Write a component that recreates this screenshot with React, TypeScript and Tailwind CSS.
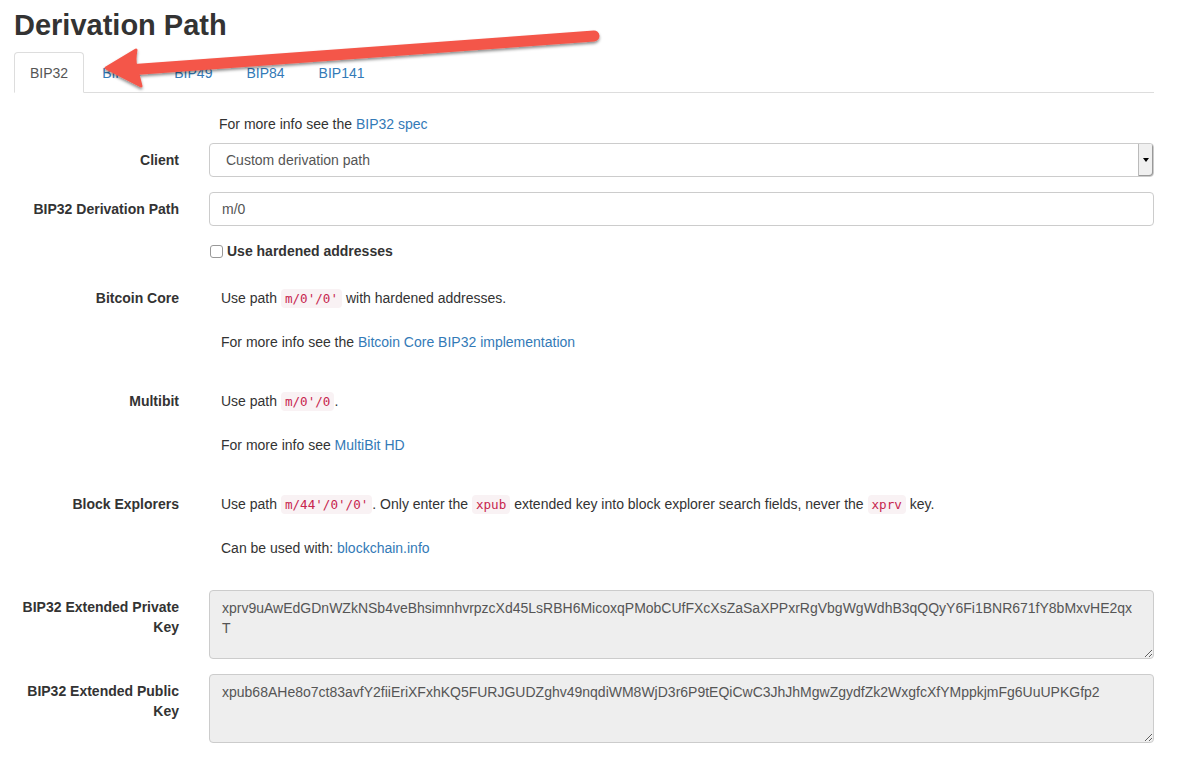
import React, { ReactNode } from 'react';

const tabs = ['BIP32', 'BIP44', 'BIP49', 'BIP84', 'BIP141'];

const Code: React.FC<{ children: ReactNode }> = ({ children }) => (
  <code className="font-['DejaVu_Sans_Mono',monospace] text-[12.6px] leading-none text-[#c7254e] bg-[#f9f2f4] rounded-[4px] px-[4px] py-[2px]">{children}</code>
);

const Link: React.FC<{ children: ReactNode }> = ({ children }) => (
  <a className="text-[#337ab7]">{children}</a>
);

const Row: React.FC<{ label: ReactNode; children: ReactNode; className?: string }> = ({ label, children, className = '' }) => (
  <div className={`flex ${className}`}>
    <div className="w-[165px] shrink-0 text-right font-bold pt-[7px] leading-[20px]">{label}</div>
    <div className="ml-[30px] flex-1">{children}</div>
  </div>
);

const InfoRow: React.FC<{ label: string; first: ReactNode; second: ReactNode; className?: string }> = ({ label, first, second, className = '' }) => (
  <div className={`flex ${className}`}>
    <div className="w-[165px] shrink-0 text-right font-bold leading-[20px] h-[20px]">{label}</div>
    <div className="ml-[42px] flex-1 leading-[20px]">
      <p className="h-[20px]">{first}</p>
      <p className="mt-[24px] h-[20px]">{second}</p>
    </div>
  </div>
);

const Arrow = () => (
  <svg className="absolute left-0 top-0 pointer-events-none" width="640" height="110" viewBox="0 0 640 110">
    <defs>
      <filter id="sh" x="-10%" y="-50%" width="120%" height="200%">
        <feDropShadow dx="0" dy="2" stdDeviation="1.6" floodColor="#000" floodOpacity="0.45" />
      </filter>
    </defs>
    <g filter="url(#sh)">
      <line x1="128" y1="70" x2="594" y2="36" stroke="#f4574a" strokeWidth="11" strokeLinecap="round" />
      <path d="M106 68 L136 50 Q134 61 136 66 L141 86 Z" fill="#f4574a" stroke="#f4574a" strokeWidth="3" strokeLinejoin="round" />
    </g>
  </svg>
);

const areaClass =
  'block w-full h-[69px] bg-[#eee] border border-[#ccc] rounded-[4px] px-[12px] py-[7px] leading-[20px] text-[#555] resize-y';

export default function App() {
  return (
    <div className="relative bg-white min-h-[765px] font-['Liberation_Sans',Arial,sans-serif] text-[14px] text-[#333] pl-[14px] w-[1140px] box-content">
      <h1 className="pt-[9px] text-[29px] leading-[32px] font-bold">Derivation Path</h1>
      <ul className="mt-[11px] flex border-b border-[#ddd] h-[41px]">
        {tabs.map((t, i) => (
          <li key={t} className="mr-[2px]">
            <a
              className={
                i === 0
                  ? 'block px-[15px] py-[10px] leading-[20px] border border-[#ddd] border-b-white rounded-t-[4px] bg-white text-[#555] h-[41px]'
                  : 'block px-[15px] py-[10px] leading-[20px] border border-transparent text-[#337ab7]'
              }
            >
              {t}
            </a>
          </li>
        ))}
      </ul>

      <p className="mt-[21px] ml-[205px] leading-[20px]">
        For more info see the <Link>BIP32 spec</Link>
      </p>

      <Row label="Client" className="mt-[9px]">
        <div className="relative h-[34px] border border-[#ccc] rounded-[4px] flex items-center pl-[16px] text-[#555]">
          Custom derivation path
          <div className="absolute right-0 top-0 bottom-0 w-[15px] bg-[#f0f0f0] border-l border-[#bbb] rounded-r-[3px] shadow-[inset_-1px_-1px_0_#999] flex items-center justify-center">
            <div className="w-0 h-0 border-l-[3.5px] border-r-[3.5px] border-t-[4px] border-l-transparent border-r-transparent border-t-black" />
          </div>
        </div>
      </Row>

      <Row label="BIP32 Derivation Path" className="mt-[15px]">
        <div className="h-[34px] border border-[#ccc] rounded-[4px] flex items-center pl-[12px] text-[#555]">m/0</div>
      </Row>

      <div className="mt-[15px] ml-[196px] flex items-center h-[20px] font-bold">
        <span className="w-[13px] h-[13px] border border-[#999] rounded-[3px] bg-white mr-[4px] mt-[1px]" />
        Use hardened addresses
      </div>

      <InfoRow
        className="mt-[27px]"
        label="Bitcoin Core"
        first={<>Use path <Code>m/0'/0'</Code> with hardened addresses.</>}
        second={<>For more info see the <Link>Bitcoin Core BIP32 implementation</Link></>}
      />
      <InfoRow
        className="mt-[39px]"
        label="Multibit"
        first={<>Use path <Code>m/0'/0</Code>.</>}
        second={<>For more info see <Link>MultiBit HD</Link></>}
      />
      <InfoRow
        className="mt-[39px]"
        label="Block Explorers"
        first={<>Use path <Code>m/44'/0'/0'</Code>. Only enter the <Code>xpub</Code> extended key into block explorer search fields, never the <Code>xprv</Code> key.</>}
        second={<>Can be used with: <Link>blockchain.info</Link></>}
      />

      <Row label={<>BIP32 Extended Private<br />Key</>} className="mt-[32px]">
        <textarea
          readOnly
          className={areaClass}
          value={'xprv9uAwEdGDnWZkNSb4veBhsimnhvrpzcXd45LsRBH6MicoxqPMobCUfFXcXsZaSaXPPxrRgVbgWgWdhB3qQQyY6Fi1BNR671fY8bMxvHE2qx\nT'}
        />
      </Row>
      <Row label={<>BIP32 Extended Public<br />Key</>} className="mt-[15px]">
        <textarea
          readOnly
          className={areaClass}
          value="xpub68AHe8o7ct83avfY2fiiEriXFxhKQ5FURJGUDZghv49nqdiWM8WjD3r6P9tEQiCwC3JhJhMgwZgydfZk2WxgfcXfYMppkjmFg6UuUPKGfp2"
        />
      </Row>

      <Arrow />
    </div>
  );
}
